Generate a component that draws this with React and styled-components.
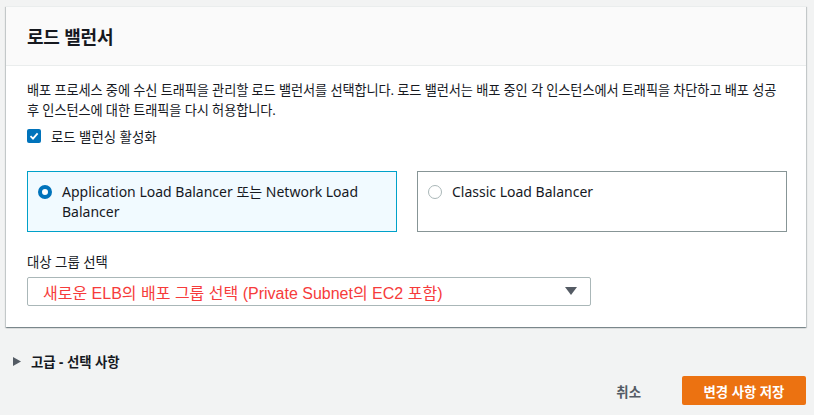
import React from 'react';
import styled, { createGlobalStyle } from 'styled-components';

const GlobalStyle = createGlobalStyle`
  html, body {
    margin: 0;
    padding: 0;
    background: #f2f3f3;
  }
  body {
    font-family: "Noto Sans", "Noto Sans CJK KR", sans-serif;
    color: #16191f;
  }
  * {
    box-sizing: border-box;
  }
`;

const Page = styled.div`
  width: 814px;
  height: 415px;
  padding: 6px 8px 0 6px;
`;

const Panel = styled.section`
  background: #fff;
  width: 800px;
  box-shadow: 0 1px 1px 0 rgba(0, 28, 36, 0.3), 1px 1px 1px 0 rgba(0, 28, 36, 0.15),
    -1px 1px 1px 0 rgba(0, 28, 36, 0.15);
  border-top: 1px solid #eaeded;
`;

const PanelHeader = styled.header`
  background: #fafafa;
  border-bottom: 1px solid #eaeded;
  height: 59px;
  display: flex;
  align-items: center;
  padding: 0 21px;
`;

const Title = styled.h2`
  margin: 0;
  font-size: 18px;
  font-weight: 700;
  letter-spacing: -0.2px;
`;

const PanelBody = styled.div`
  padding: 14px 20px 21px 21px;
`;

const Description = styled.p`
  margin: 0;
  font-size: 13.2px;
  line-height: 20px;
  white-space: nowrap;
  letter-spacing: -0.1px;
`;

const CheckRow = styled.label`
  display: flex;
  align-items: center;
  gap: 10px;
  height: 20px;
  margin-top: 6px;
  font-size: 13.4px;
`;

const CheckBox = styled.span`
  width: 14px;
  height: 14px;
  border-radius: 2px;
  background: #0073bb;
  display: flex;
  align-items: center;
  justify-content: center;
`;

const Cards = styled.div`
  display: grid;
  grid-template-columns: 370px 370px;
  gap: 20px;
  margin-top: 25px;
`;

const Card = styled.div`
  border: 1px solid ${(p) => (p.$selected ? '#00a1c9' : '#879596')};
  background: ${(p) => (p.$selected ? '#f1faff' : '#fff')};
  height: 61px;
  padding: 10px;
  display: flex;
  align-items: flex-start;
  gap: 10px;
`;

const Radio = styled.span`
  flex: none;
  width: 14px;
  height: 14px;
  margin-top: 3px;
  border-radius: 50%;
  background: #fff;
  border: ${(p) => (p.$checked ? '4px solid #0073bb' : '1px solid #aab7b8')};
`;

const CardText = styled.span`
  font-size: 14px;
  line-height: 20px;
`;

const FieldLabel = styled.div`
  margin-top: 20px;
  font-size: 13.4px;
  line-height: 20px;
`;

const Select = styled.div`
  margin-top: 5px;
  width: 564px;
  height: 29px;
  border: 1px solid #aab7b8;
  border-radius: 2px;
  display: flex;
  align-items: center;
  justify-content: space-between;
  padding: 0 13px 0 15px;
`;

const SelectValue = styled.span`
  font-family: "Liberation Sans", Arial, "Noto Sans CJK KR", sans-serif;
  font-size: 16px;
  color: #f63b3b;
`;

const Footer = styled.div`
  display: flex;
  flex-direction: column;
`;

const Advanced = styled.div`
  display: flex;
  align-items: center;
  gap: 10px;
  height: 20px;
  margin: 24px 0 0 7px;
  font-size: 13.4px;
  font-weight: 700;
  color: #16191f;
`;

const Actions = styled.div`
  display: flex;
  justify-content: flex-end;
  align-items: center;
  gap: 41px;
  margin-top: 5px;
`;

const LinkButton = styled.button`
  background: none;
  border: none;
  padding: 0;
  font-family: inherit;
  font-size: 13.4px;
  font-weight: 700;
  color: #545b64;
`;

const PrimaryButton = styled.button`
  background: #ec7211;
  border: none;
  border-radius: 2px;
  width: 124px;
  height: 29px;
  color: #fff;
  font-family: inherit;
  font-size: 13.4px;
  font-weight: 700;
`;

export default function App() {
  return (
    <>
      <GlobalStyle />
      <Page>
        <Panel>
          <PanelHeader>
            <Title>로드 밸런서</Title>
          </PanelHeader>
          <PanelBody>
            <Description>
              배포 프로세스 중에 수신 트래픽을 관리할 로드 밸런서를 선택합니다. 로드 밸런서는 배포 중인 각 인스턴스에서 트래픽을 차단하고 배포 성공
              <br />
              후 인스턴스에 대한 트래픽을 다시 허용합니다.
            </Description>
            <CheckRow>
              <CheckBox>
                <svg width="10" height="10" viewBox="0 0 10 10">
                  <path d="M1.5 5.2 L4 7.6 L8.6 2.4" fill="none" stroke="#fff" strokeWidth="1.8" />
                </svg>
              </CheckBox>
              로드 밸런싱 활성화
            </CheckRow>
            <Cards>
              <Card $selected>
                <Radio $checked />
                <CardText>Application Load Balancer 또는 Network Load Balancer</CardText>
              </Card>
              <Card>
                <Radio />
                <CardText>Classic Load Balancer</CardText>
              </Card>
            </Cards>
            <FieldLabel>대상 그룹 선택</FieldLabel>
            <Select>
              <SelectValue>새로운 ELB의 배포 그룹 선택 (Private Subnet의 EC2 포함)</SelectValue>
              <svg width="12" height="9" viewBox="0 0 12 9">
                <path d="M0 0 H12 L6 8 Z" fill="#545b64" />
              </svg>
            </Select>
          </PanelBody>
        </Panel>
        <Footer>
          <Advanced>
            <svg width="8" height="9" viewBox="0 0 8 9">
              <path d="M0 0 L8 4.5 L0 9 Z" fill="#545b64" />
            </svg>
            고급 - 선택 사항
          </Advanced>
          <Actions>
            <LinkButton>취소</LinkButton>
            <PrimaryButton>변경 사항 저장</PrimaryButton>
          </Actions>
        </Footer>
      </Page>
    </>
  );
}
